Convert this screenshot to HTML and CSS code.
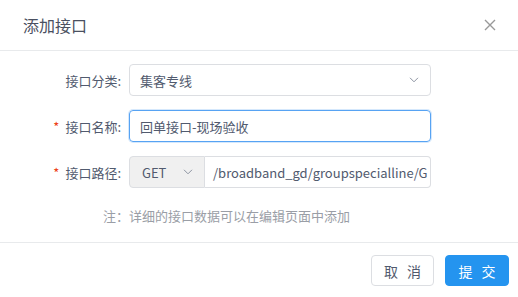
FILE: index.html
```html
<!DOCTYPE html>
<html lang="zh-CN">
<head>
    <meta charset="UTF-8">
    <title>添加接口</title>
    <link rel="stylesheet" href="styles.css">
</head>
<body>

<div class="modal">
    <div class="modal-header">
        <span class="modal-title">添加接口</span>
        <svg class="close" width="12" height="12" viewBox="0 0 12 12">
            <path d="M1 1 L11 11 M11 1 L1 11" stroke="#999" stroke-width="1.4" fill="none"/>
        </svg>
    </div>

    <div class="modal-body">
        <div class="form-item">
            <label class="form-label">接口分类:</label>
            <div class="select">
                <span>集客专线</span>
                <svg class="arrow" width="10" height="6" viewBox="0 0 10 6">
                    <path d="M1 0.8 L5 4.8 L9 0.8" stroke="#8c93a1" stroke-width="1" fill="none"/>
                </svg>
            </div>
        </div>

        <div class="form-item">
            <label class="form-label required">接口名称:</label>
            <div class="input focus">回单接口-现场验收</div>
        </div>

        <div class="form-item">
            <label class="form-label required">接口路径:</label>
            <div class="input-group">
                <div class="method">
                    <span>GET</span>
                    <svg class="arrow" width="10" height="6" viewBox="0 0 10 6">
                        <path d="M1 0.8 L5 4.8 L9 0.8" stroke="#8c93a1" stroke-width="1" fill="none"/>
                    </svg>
                </div>
                <div class="path">/broadband_gd/groupspecialline/G</div>
            </div>
        </div>

        <p class="note">注：详细的接口数据可以在编辑页面中添加</p>
    </div>

    <div class="modal-footer">
        <button class="btn">取 消</button>
        <button class="btn btn-primary">提 交</button>
    </div>
</div>

</body>
</html>
```

FILE: styles.css
```css
body {
    margin: 0;
    padding: 0;
    background: #fff;
    font-family: "Noto Sans CJK SC", "Noto Sans", sans-serif;
    font-size: 13px;
    color: #515a6e;
}
.modal {
    width: 518px;
    height: 297px;
    display: flex;
    flex-direction: column;
}
.modal-header {
    height: 50px;
    border-bottom: 1px solid #e8eaec;
    display: flex;
    align-items: center;
    justify-content: space-between;
    padding: 0 22px 0 23px;
}
.modal-title {
    font-size: 16px;
    color: #4a5060;
}
.close {
    display: block;
}
.modal-body {
    height: 191px;
    padding-top: 13px;
    box-sizing: border-box;
}
.form-item {
    display: flex;
    align-items: center;
    margin-bottom: 14px;
}
.form-label {
    width: 129px;
    box-sizing: border-box;
    padding-right: 8px;
    text-align: right;
    color: #515a6e;
}
.required::before {
    content: "*";
    color: #ed4014;
    margin-right: 6px;
}
.select, .input {
    width: 302px;
    height: 32px;
    box-sizing: border-box;
    border: 1px solid #dcdee2;
    border-radius: 4px;
    padding: 0 11px 0 10px;
    display: flex;
    align-items: center;
    justify-content: space-between;
}
.focus {
    border-color: #57a3f3;
    box-shadow: 0 0 0 1px rgba(45, 140, 240, 0.2);
    color: #515a6e;
}
.input-group {
    width: 302px;
    height: 32px;
    display: flex;
}
.method {
    width: 76px;
    box-sizing: border-box;
    background: #f0f0f0;
    border: 1px solid #dcdee2;
    border-radius: 4px 0 0 4px;
    display: flex;
    align-items: center;
    justify-content: space-between;
    padding: 0 11px 0 12px;
}
.path {
    flex: 1;
    box-sizing: border-box;
    border: 1px solid #dcdee2;
    border-left: none;
    border-radius: 0 4px 4px 0;
    padding: 0 8px;
    display: flex;
    align-items: center;
    white-space: nowrap;
    overflow: hidden;
}
.note {
    margin: 18px 0 0 103px;
    color: #9a9ea6;
}
.modal-footer {
    border-top: 1px solid #e8eaec;
    display: flex;
    justify-content: flex-end;
    gap: 11px;
    padding: 12px 9px 0 0;
}
.btn {
    width: 63px;
    height: 31px;
    border: 1px solid #dcdee2;
    border-radius: 4px;
    background: #fff;
    color: #515a6e;
    font-family: inherit;
    font-size: 14px;
    letter-spacing: 3px;
    padding: 0 0 0 3px;
}
.btn-primary {
    width: 64px;
    background: #2494ef;
    border-color: #2494ef;
    color: #fff;
}
```
